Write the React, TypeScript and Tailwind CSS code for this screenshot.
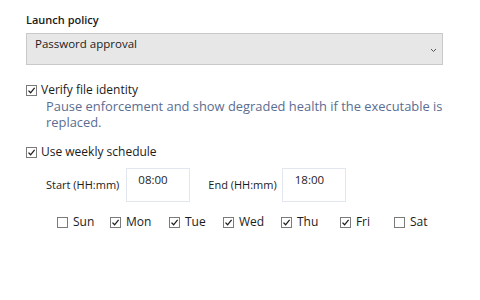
import React from "react";

function Check({ checked }: { checked: boolean }) {
  return (
    <span className="flex h-[11px] w-[11px] shrink-0 items-center justify-center border border-[#7a7a7a] bg-white">
      {checked && (
        <svg width="9" height="9" viewBox="0 0 9 9">
          <path d="M1.5 4.6 L3.6 6.8 L7.6 1.8" fill="none" stroke="#1f1f1f" strokeWidth="1.3" />
        </svg>
      )}
    </span>
  );
}

const days = [
  { name: "Sun", on: false, w: "w-[54px]" },
  { name: "Mon", on: true, w: "w-[60px]" },
  { name: "Tue", on: true, w: "w-[55px]" },
  { name: "Wed", on: true, w: "w-[59px]" },
  { name: "Thu", on: true, w: "w-[60px]" },
  { name: "Fri", on: true, w: "w-[55px]" },
  { name: "Sat", on: false, w: "w-[50px]" },
];

export default function App() {
  return (
    <div className="h-[300px] w-[480px] bg-white pl-[26px] pr-[37px] pt-[12px] font-['Open_Sans',sans-serif] text-[11.5px] text-[#1b1b1b]">
      <div className="text-[11px] font-semibold leading-[16px]">Launch policy</div>
      <div className="mt-[5px] flex h-[32px] items-start justify-between border border-[#c9c9c9] bg-[#e7e7e7] pl-[8px] pr-[5px] pt-[2px]">
        <span className="leading-[16px]">Password approval</span>
        <svg className="mt-[12px]" width="7" height="5" viewBox="0 0 7 5">
          <path d="M1 1 L3.5 3.5 L6 1" fill="none" stroke="#555" strokeWidth="1" />
        </svg>
      </div>

      <div className="mt-[17px] flex items-center gap-[4px]">
        <Check checked />
        <span className="text-[12px] leading-[16px]">Verify file identity</span>
      </div>
      <p className="ml-[20px] text-[12.9px] leading-[16px] text-[#5b6d91]">
        Pause enforcement and show degraded health if the executable is replaced.
      </p>

      <div className="mt-[14px] flex items-center gap-[4px]">
        <Check checked />
        <span className="text-[12px] leading-[16px]">Use weekly schedule</span>
      </div>

      <div className="ml-[20px] mt-[8px] flex items-center whitespace-nowrap text-[11px]">
        <span className="leading-[16px]">Start (HH:mm)</span>
        <div className="ml-[7px] h-[34px] w-[64px] border border-[#e2e6ee] pl-[11px] pt-[3px] text-[11.5px] leading-[16px]">08:00</div>
        <span className="ml-[18px] leading-[16px]">End (HH:mm)</span>
        <div className="ml-[5px] h-[34px] w-[64px] border border-[#e2e6ee] pl-[12px] pt-[3px] text-[11.5px] leading-[16px]">18:00</div>
      </div>

      <div className="ml-[31px] mt-[12px] flex items-center">
        {days.map((d) => (
          <div key={d.name} className={`${d.w} flex items-center gap-[5px]`}>
            <Check checked={d.on} />
            <span className="text-[12px] leading-[16px]">{d.name}</span>
          </div>
        ))}
      </div>
    </div>
  );
}
